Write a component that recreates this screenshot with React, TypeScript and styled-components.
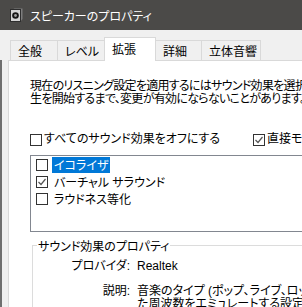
import React from "react";
import styled, { createGlobalStyle } from "styled-components";

const uiFont = `"Liberation Sans", "Noto Sans CJK JP", sans-serif`;

const GlobalStyle = createGlobalStyle`
  html, body {
    margin: 0;
    padding: 0;
    background: #f0f0f0;
  }
  body {
    font-family: ${uiFont};
    font-size: 12px;
    color: #000;
    font-feature-settings: "palt";
  }
`;

const Window = styled.div`
  width: 302px;
  height: 307px;
  overflow: hidden;
  display: flex;
  flex-direction: column;
  background: #f0f0f0;
`;

const TitleBar = styled.div`
  flex: none;
  height: 30px;
  display: flex;
  align-items: center;
  gap: 7px;
  padding-left: 10px;
  background: #4b4a48;
  color: #fff;
  font-size: 12px;
`;

const TabRow = styled.div`
  flex: none;
  display: flex;
  align-items: flex-end;
  padding: 7px 0 0 10px;
`;

const Tab = styled.div<{ $w: number; $active?: boolean }>`
  position: relative;
  z-index: ${(p) => (p.$active ? 2 : 0)};
  box-sizing: border-box;
  width: ${(p) => p.$w}px;
  height: ${(p) => (p.$active ? 24 : 20)}px;
  margin-left: -1px;
  margin-bottom: ${(p) => (p.$active ? -1 : 0)}px;
  padding: 0 0 ${(p) => (p.$active ? 2 : 0)}px 7px;
  display: flex;
  align-items: center;
  background: ${(p) => (p.$active ? "#fff" : "#f0f0f0")};
  border: 1px solid #d9d9d9;
  border-bottom: none;
  white-space: nowrap;
  &:first-child {
    margin-left: 0;
  }
`;

const PanelArea = styled.div`
  flex: 1;
  display: flex;
  border-left: 2px solid #6f6f6f;
  padding-left: 6px;
`;

const Panel = styled.div`
  position: relative;
  z-index: 1;
  flex: none;
  width: 420px;
  display: flex;
  flex-direction: column;
  padding-left: 21px;
  background: #fff;
  border-top: 1px solid #d9d9d9;
  border-left: 1px solid #d9d9d9;
`;

const Description = styled.p`
  margin: 19px 0 0;
  line-height: 13px;
  letter-spacing: -0.7px;
  white-space: nowrap;
`;

const CheckRow = styled.div`
  margin-top: 27px;
  display: grid;
  grid-template-columns: 223px auto;
  align-items: center;
`;

const CheckLabel = styled.label`
  display: flex;
  align-items: center;
  gap: 2px;
  line-height: 13px;
  white-space: nowrap;
`;

const Box = styled.span`
  flex: none;
  box-sizing: border-box;
  width: 12px;
  height: 12px;
  display: flex;
  align-items: center;
  justify-content: center;
  background: #fff;
  border: 1px solid #333;
`;

const ListBox = styled.div`
  box-sizing: border-box;
  height: 77px;
  margin-top: 9px;
  padding-left: 5px;
  border: 1px solid #828790;
  display: flex;
  flex-direction: column;
`;

const ListItem = styled.div`
  height: 17px;
  display: flex;
  align-items: center;
  gap: 4px;
`;

const ItemText = styled.span<{ $selected?: boolean }>`
  height: 16px;
  display: flex;
  align-items: center;
  padding: 0 2px;
  background: ${(p) => (p.$selected ? "#0078d7" : "transparent")};
  color: ${(p) => (p.$selected ? "#fff" : "#000")};
  white-space: nowrap;
`;

const Group = styled.fieldset`
  margin: 4px 0 0 2px;
  padding: 0;
  border: 1px solid #dcdcdc;
  min-width: 0;
`;

const Legend = styled.legend`
  margin-left: 4px;
  padding: 4px 1px 0;
  line-height: 14px;
  white-space: nowrap;
`;

const PropGrid = styled.div`
  margin-top: 6px;
  display: grid;
  grid-template-columns: 97px 1fr;
  column-gap: 7px;
  row-gap: 12px;
  line-height: 13px;
`;

const PropName = styled.span`
  text-align: right;
  white-space: nowrap;
`;

const PropValue = styled.span`
  white-space: nowrap;
`;

const SpeakerIcon = () => (
  <svg width="13" height="14" viewBox="0 0 13 14">
    <path d="M2.5 1.5 L4.5 0.5 H12.5 V11 L10.5 13.5 Z" fill="#7d7d7d" />
    <rect x="0.5" y="1.5" width="10" height="12" fill="#d4d4d4" stroke="#2e2e2e" />
    <circle cx="5.5" cy="7.5" r="3.3" fill="#151515" />
    <circle cx="5.5" cy="7.5" r="1.4" fill="#a0a0a0" />
  </svg>
);

const CheckBox = ({ checked }: { checked?: boolean }) => (
  <Box>
    {checked && (
      <svg width="10" height="10" viewBox="0 0 10 10">
        <polyline points="1.5,5 4,7.5 8.5,2" fill="none" stroke="#555" strokeWidth="1.2" />
      </svg>
    )}
  </Box>
);

const tabs = [
  { label: "全般", w: 48 },
  { label: "レベル", w: 48 },
  { label: "拡張", w: 52, active: true },
  { label: "詳細", w: 47 },
  { label: "立体音響", w: 60 },
];

const effects = [
  { label: "イコライザ", checked: false, selected: true },
  { label: "バーチャル サラウンド", checked: true },
  { label: "ラウドネス等化", checked: false },
];

export default function App() {
  return (
    <>
      <GlobalStyle />
      <Window>
        <TitleBar>
          <SpeakerIcon />
          <span>スピーカーのプロパティ</span>
        </TitleBar>
        <TabRow>
          {tabs.map((t) => (
            <Tab key={t.label} $w={t.w} $active={t.active}>
              {t.label}
            </Tab>
          ))}
        </TabRow>
        <PanelArea>
          <Panel>
            <Description>
              現在のリスニング設定を適用するにはサウンド効果を選択し、再
              <br />
              生を開始するまで、変更が有効にならないことがあります。
            </Description>
            <CheckRow>
              <CheckLabel>
                <CheckBox />
                すべてのサウンド効果をオフにする
              </CheckLabel>
              <CheckLabel>
                <CheckBox checked />
                直接モード
              </CheckLabel>
            </CheckRow>
            <ListBox>
              {effects.map((e) => (
                <ListItem key={e.label}>
                  <CheckBox checked={e.checked} />
                  <ItemText $selected={e.selected}>{e.label}</ItemText>
                </ListItem>
              ))}
            </ListBox>
            <Group>
              <Legend>サウンド効果のプロパティ</Legend>
              <PropGrid>
                <PropName>プロバイダ:</PropName>
                <PropValue>Realtek</PropValue>
                <PropName>説明:</PropName>
                <PropValue>
                  音楽のタイプ (ポップ、ライブ、ロックなど) に合わせて最適化され
                  <br />
                  た周波数をエミュレートする設定です。
                </PropValue>
              </PropGrid>
            </Group>
          </Panel>
        </PanelArea>
      </Window>
    </>
  );
}
